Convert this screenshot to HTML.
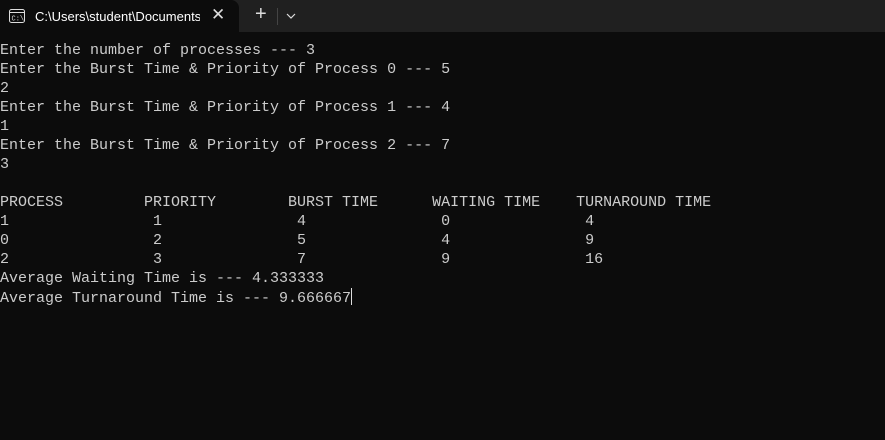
<!DOCTYPE html>
<html><head><style>
html,body{margin:0;padding:0;width:885px;height:440px;background:#0c0c0c;overflow:hidden}
.bar{position:absolute;left:0;top:0;width:885px;height:32px;background:#202020}
.tab{position:absolute;left:0;top:0;width:239px;height:33px;background:#0c0c0c;border-radius:0 8px 0 0}
.title{position:absolute;left:35px;top:9px;font:13px "Liberation Sans",sans-serif;color:#fff;white-space:nowrap;width:165px;overflow:hidden}
.x{position:absolute;left:211px;top:5px;color:#ddd;font:17px "Liberation Sans",sans-serif}
.plus{position:absolute;left:255px;top:3px;color:#ddd;font:20px "Liberation Sans",sans-serif}
.sep{position:absolute;left:277px;top:8px;width:1px;height:17px;background:#444}
pre{position:absolute;left:0;top:41px;margin:0;font:15px/19px "Liberation Mono",monospace;color:#cccccc}
.cur{display:inline-block;width:1px;height:17px;background:#ddd;vertical-align:-3px}
</style></head><body>
<div class="bar"></div>
<div class="tab"></div>
<svg style="position:absolute;left:9px;top:9px" width="16" height="14" viewBox="0 0 16 14"><rect x="0.5" y="0.5" width="15" height="13" rx="2" fill="none" stroke="#ddd"/><line x1="0.5" y1="3.5" x2="15.5" y2="3.5" stroke="#ddd"/><text x="2.5" y="11.5" font-size="7" fill="#ddd" font-family="Liberation Mono">C:\</text></svg>
<div class="title">C:\Users\student\Documents\</div>
<div class="x">✕</div>
<div class="plus">+</div>
<div class="sep"></div>
<svg style="position:absolute;left:286px;top:12px" width="10" height="8" viewBox="0 0 10 8"><path d="M1 2 L5 6 L9 2" fill="none" stroke="#ddd" stroke-width="1.2"/></svg>
<pre>Enter the number of processes --- 3
Enter the Burst Time &amp; Priority of Process 0 --- 5
2
Enter the Burst Time &amp; Priority of Process 1 --- 4
1
Enter the Burst Time &amp; Priority of Process 2 --- 7
3

PROCESS         PRIORITY        BURST TIME      WAITING TIME    TURNAROUND TIME
1                1               4               0               4
0                2               5               4               9
2                3               7               9               16
Average Waiting Time is --- 4.333333
Average Turnaround Time is --- 9.666667<span class="cur"></span></pre>
</body></html>
